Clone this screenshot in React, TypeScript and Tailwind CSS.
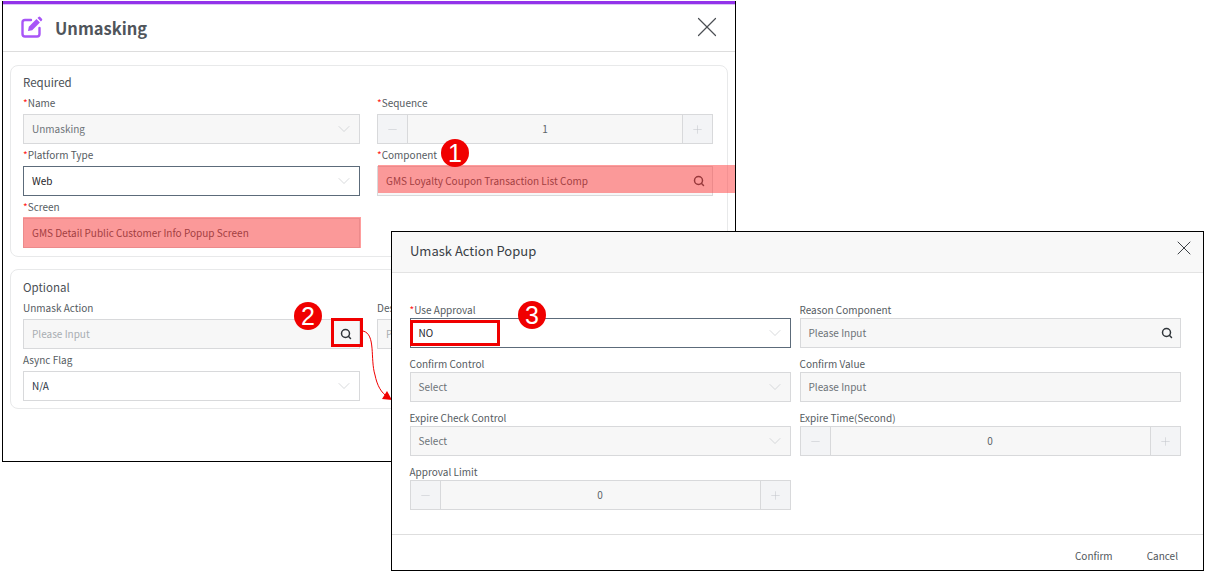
import { ChevronDown, Minus, Plus, Search, X } from "lucide-react";
import type { ReactNode } from "react";

const FONT = "font-['Noto_Sans_CJK_KR','Noto_Sans',sans-serif]";

function Field({ label, required, compact, children }: { label: string; required?: boolean; compact?: boolean; children: ReactNode }) {
  return (
    <div className="min-w-0">
      <div className={`${compact ? "h-[18px] pt-[2px]" : "h-[22px] pt-[3px]"} text-[10px] leading-[16px] text-[#555b61] whitespace-nowrap`}>
        {required && <span className="text-[#ff2020]">*</span>}
        {label}
      </div>
      {children}
    </div>
  );
}

function SelectBox({ value, active, dim }: { value: string; active?: boolean; dim?: boolean }) {
  const cls = active ? "border-[#5c6b7a] bg-white text-[#1f2429]" : dim ? "border-[#d8d9db] bg-[#f7f7f7] text-[#6d7378]" : "border-[#d8d9db] bg-white text-[#2b3644]";
  return (
    <div className={`flex h-[30px] items-center justify-between border pl-2 pr-[5px] text-[10px] ${cls}`}>
      <span className="pb-[2px]">{value}</span>
      <ChevronDown size={20} strokeWidth={0.8} className="text-[#c4c7ca]" />
    </div>
  );
}

function SearchBox({ value, tone = "text-[#6d7378]", plain }: { value: string; tone?: string; plain?: boolean }) {
  return (
    <div className={`flex h-[30px] items-center justify-between border border-[#d8d9db] bg-[#f7f7f7] pl-2 pr-[7px] text-[10px] ${tone}`}>
      <span className="whitespace-nowrap pb-[2px]">{value}</span>
      {!plain && <Search size={12} strokeWidth={3} className="text-[#30353a]" />}
    </div>
  );
}

function Stepper({ value }: { value: string }) {
  return (
    <div className="flex h-[30px] items-stretch border border-[#d8d9db] bg-[#f7f7f7] text-[10px] text-[#5d6368]">
      <div className="flex w-[30px] shrink-0 items-center justify-center border-r border-[#d8d9db] bg-[#f3f4f6]">
        <Minus size={13} strokeWidth={1} className="text-[#c3c6ca]" />
      </div>
      <div className="flex flex-1 items-center justify-center pb-[2px]">{value}</div>
      <div className="flex w-[30px] shrink-0 items-center justify-center border-l border-[#d8d9db] bg-[#f3f4f6]">
        <Plus size={13} strokeWidth={1} className="text-[#c3c6ca]" />
      </div>
    </div>
  );
}

function Badge({ n, className }: { n: string; className: string }) {
  return (
    <div className={`absolute flex h-7 w-7 items-center justify-center rounded-full bg-[#f00000] font-['Liberation_Sans',sans-serif] text-[25px] leading-none text-white ${className}`}>
      {n}
    </div>
  );
}

function Card({ title, className, children }: { title: string; className: string; children: ReactNode }) {
  return (
    <div className={`rounded-[8px] border border-[#e8e9ea] px-3 ${className}`}>
      <div className="h-[19px] text-[11.5px] leading-[18px] text-[#4a4f55]">{title}</div>
      <div className="grid grid-cols-[337px_336px] gap-x-[17px]">{children}</div>
    </div>
  );
}

function MainWindow() {
  return (
    <div className="absolute left-[2px] top-[1px] h-[461px] w-[734px] border-x-[1.5px] border-b-[1.5px] border-black bg-white">
      <div className="h-[3.5px] border-b border-[#dcc6f5] bg-[#9333ea]" />
      <div className="flex h-[47.5px] items-center justify-between border-b border-[#dddddd] pl-[18px] pr-[11px]">
        <div className="flex items-center gap-[12px]">
          <svg className="-mt-[2px]" width="22" height="22" viewBox="0 0 22 22" fill="none">
            <path d="M10 4H4a2.5 2.5 0 0 0-2.5 2.5V18A2.5 2.5 0 0 0 4 20.5h12a2.5 2.5 0 0 0 2.5-2.5v-6" stroke="#a855f7" strokeWidth="2.4" strokeLinecap="round" />
            <path d="M7 15l.8-4.2 7.7-7.7 3.4 3.4-7.7 7.7z" fill="#a855f7" />
            <path d="M16.5 2l1-1a1.2 1.2 0 0 1 1.7 0l1.7 1.7a1.2 1.2 0 0 1 0 1.7l-1 1z" fill="#a855f7" />
          </svg>
          <span className="text-[16.5px] font-bold leading-none text-[#50555b]">Unmasking</span>
        </div>
        <X size={34} strokeWidth={0.85} className="-mt-[2px] text-[#4b4f54]" />
      </div>
      <div className="px-[7px] pt-[13px]">
        <Card title="Required" className="h-[192px] pt-[7px]">
          <Field label="Name" required>
            <SelectBox value="Unmasking" dim />
          </Field>
          <Field label="Sequence" required>
            <Stepper value="1" />
          </Field>
          <Field label="Platform Type" required>
            <SelectBox value="Web" active />
          </Field>
          <Field label="Component" required>
            <SearchBox value="GMS Loyalty Coupon Transaction List Comp" tone="text-[#3f4347]" />
          </Field>
          <Field label="Screen" required>
            <SearchBox value="GMS Detail Public Customer Info Popup Screen" tone="text-[#3f4347]" plain />
          </Field>
        </Card>
        <Card title="Optional" className="mt-[12px] h-[140px] pt-[8px]">
          <Field label="Unmask Action">
            <SearchBox value="Please Input" tone="text-[#a8adb2]" />
          </Field>
          {/* only the start of this field shows, the popup sits on the rest */}
          <Field label="Des">
            <SearchBox value="P" tone="text-[#a8adb2]" plain />
          </Field>
          <Field label="Async Flag">
            <SelectBox value="N/A" />
          </Field>
        </Card>
      </div>
    </div>
  );
}

function PopupWindow() {
  return (
    <div className="absolute left-[391px] top-[231px] flex h-[340px] w-[813px] flex-col border-[1.5px] border-black bg-white">
      <div className="flex h-[41px] shrink-0 items-center justify-between border-b border-[#e3e3e3] bg-[#f8f8f8] pb-[3px] pl-[18px] pr-[7px]">
        <span className="text-[13px] text-[#3a3f45]">Umask Action Popup</span>
        <X size={24} strokeWidth={1} className="-mt-[5px] text-[#3c4045]" />
      </div>
      <div className="grid flex-1 grid-cols-[381px_381px] content-start gap-x-[9px] gap-y-[6px] pl-[17.5px] pt-[27px]">
        <Field label="Use Approval" required compact>
          <SelectBox value="NO" active />
        </Field>
        <Field label="Reason Component" compact>
          <SearchBox value="Please Input" />
        </Field>
        <Field label="Confirm Control" compact>
          <SelectBox value="Select" dim />
        </Field>
        <Field label="Confirm Value" compact>
          <SearchBox value="Please Input" plain />
        </Field>
        <Field label="Expire Check Control" compact>
          <SelectBox value="Select" dim />
        </Field>
        <Field label="Expire Time(Second)" compact>
          <Stepper value="0" />
        </Field>
        <Field label="Approval Limit" compact>
          <Stepper value="0" />
        </Field>
      </div>
      <div className="flex h-[36px] shrink-0 items-center justify-end gap-[34px] border-t border-[#dedede] pr-[25px] pt-[5px] text-[10px] text-[#50555a]">
        <span>Confirm</span>
        <span>Cancel</span>
      </div>
    </div>
  );
}

export default function App() {
  return (
    <div className={`relative h-[576px] w-[1209px] overflow-hidden bg-white ${FONT}`}>
      <MainWindow />

      {/* highlights over the main window */}
      <div className="absolute left-[378px] top-[165px] h-[28px] w-[357px] bg-[#ff3c3c]/50" />
      <div className="absolute left-[23px] top-[217px] h-[31px] w-[338px] bg-[#ff3c3c]/50" />
      <Badge n="1" className="left-[441px] top-[139px]" />
      <Badge n="2" className="left-[294px] top-[302px]" />
      <div className="absolute left-[331px] top-[318px] h-[29px] w-[32px] border-[3px] border-[#f00000]" />
      <svg className="absolute left-[360px] top-[325px]" width="34" height="84" viewBox="0 0 34 84" fill="none">
        <path d="M3 6C16 9 10 34 15 50c2 10 6 18 13 22" stroke="#f00000" strokeWidth="1" />
        <path d="M32 75 22 74l5-8z" fill="#f00000" />
      </svg>

      <PopupWindow />
      <div className="absolute left-[410px] top-[320px] h-[26px] w-[90px] border-[3px] border-[#f00000]" />
      <Badge n="3" className="left-[518px] top-[301px]" />
    </div>
  );
}
